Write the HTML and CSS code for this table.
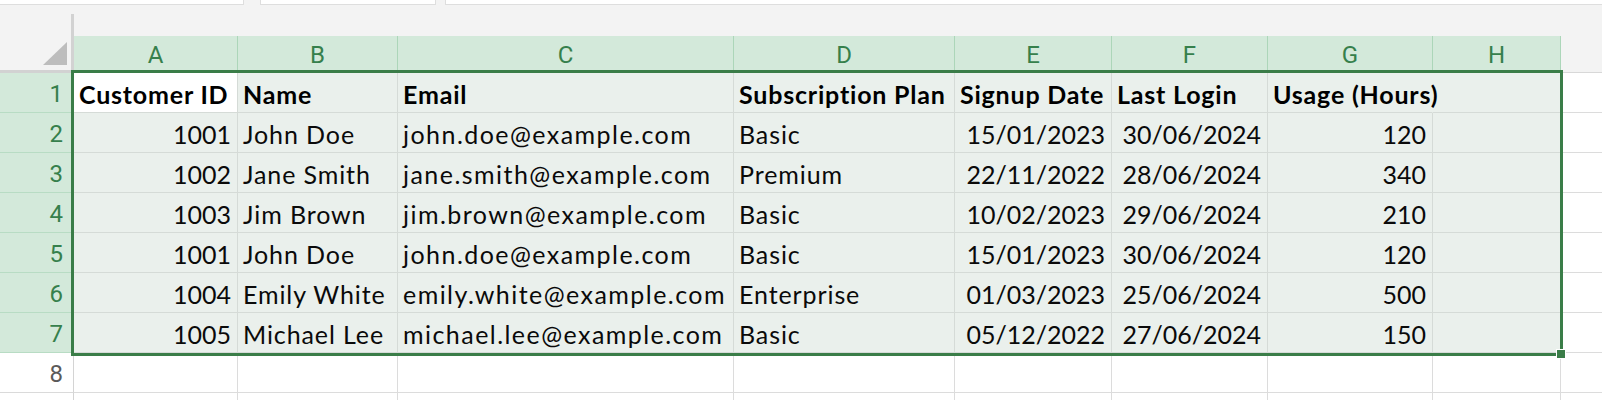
FILE: index.html
```html
<!DOCTYPE html>
<html>
<head>
<meta charset="utf-8">
<link rel="stylesheet" href="styles.css">
</head>
<body>
<div class="sheet">
  <div class="tabs"><span class="tab t1"></span><span class="tab t2"></span><span class="tab t3"></span></div>
  <div class="corner"><span class="tri"></span></div>
  <div class="gap"></div>

  <div class="ch">A</div><div class="ch">B</div><div class="ch">C</div><div class="ch">D</div><div class="ch">E</div><div class="ch">F</div><div class="ch">G</div><div class="ch">H</div><div class="ch-rest"></div>

  <div class="rh">1</div>
  <div class="c b active">Customer ID</div><div class="c b">Name</div><div class="c b">Email</div><div class="c b">Subscription Plan</div><div class="c b">Signup Date</div><div class="c b">Last Login</div><div class="c b ovf">Usage (Hours)</div><div class="c"></div><div class="rest"></div>

  <div class="rh">2</div>
  <div class="c num">1001</div><div class="c t">John Doe</div><div class="c m">john.doe@example.com</div><div class="c t">Basic</div><div class="c num">15/01/2023</div><div class="c num">30/06/2024</div><div class="c num">120</div><div class="c"></div><div class="rest"></div>

  <div class="rh">3</div>
  <div class="c num">1002</div><div class="c t">Jane Smith</div><div class="c m">jane.smith@example.com</div><div class="c t">Premium</div><div class="c num">22/11/2022</div><div class="c num">28/06/2024</div><div class="c num">340</div><div class="c"></div><div class="rest"></div>

  <div class="rh">4</div>
  <div class="c num">1003</div><div class="c t">Jim Brown</div><div class="c m">jim.brown@example.com</div><div class="c t">Basic</div><div class="c num">10/02/2023</div><div class="c num">29/06/2024</div><div class="c num">210</div><div class="c"></div><div class="rest"></div>

  <div class="rh">5</div>
  <div class="c num">1001</div><div class="c t">John Doe</div><div class="c m">john.doe@example.com</div><div class="c t">Basic</div><div class="c num">15/01/2023</div><div class="c num">30/06/2024</div><div class="c num">120</div><div class="c"></div><div class="rest"></div>

  <div class="rh">6</div>
  <div class="c num">1004</div><div class="c t">Emily White</div><div class="c m">emily.white@example.com</div><div class="c t">Enterprise</div><div class="c num">01/03/2023</div><div class="c num">25/06/2024</div><div class="c num">500</div><div class="c"></div><div class="rest"></div>

  <div class="rh">7</div>
  <div class="c num">1005</div><div class="c t">Michael Lee</div><div class="c m">michael.lee@example.com</div><div class="c t">Basic</div><div class="c num">05/12/2022</div><div class="c num">27/06/2024</div><div class="c num">150</div><div class="c"></div><div class="rest"></div>

  <div class="rh plain">8</div>
  <div class="c e"></div><div class="c e"></div><div class="c e"></div><div class="c e"></div><div class="c e"></div><div class="c e"></div><div class="c e"></div><div class="c e"></div><div class="rest"></div>

  <div class="rh plain"></div>
  <div class="c e"></div><div class="c e"></div><div class="c e"></div><div class="c e"></div><div class="c e"></div><div class="c e"></div><div class="c e"></div><div class="c e"></div><div class="rest"></div>

  <div class="sel"><span class="handle"></span></div>
</div>
</body>
</html>
```

FILE: styles.css
```css
html, body {
  margin: 0;
  background: #ffffff;
}

.sheet {
  position: relative;
  display: grid;
  grid-template-columns: 74px 164px 160px 336px 221px 157px 156px 165px 128px 1fr;
  grid-template-rows: 14px 22px 37px repeat(9, 40px);
  height: 400px;
  overflow: hidden;
  font-family: Lato, "Liberation Sans", sans-serif;
}

.tabs {
  grid-column: 1 / -1;
  background: #f3f3f3;
  display: flex;
  align-items: flex-start;
}

.tab {
  height: 5px;
  background: #ffffff;
  border: 1.5px solid #dedede;
  border-top: none;
  box-sizing: border-box;
}

.t1 { width: 245px; margin-left: -1px; border-left: none; }
.t2 { width: 176px; margin-left: 16px; }
.t3 { flex: 1; margin-left: 9px; border-right: none; }

.corner {
  grid-column: 1;
  grid-row: 2 / 4;
  background: #f3f3f3;
  border-right: 3px solid #d2d2d2;
  border-bottom: 3px solid #d2d2d2;
  display: flex;
  justify-content: flex-end;
  align-items: flex-end;
  padding: 0 4px 5px 0;
}

.tri {
  width: 24px;
  height: 23px;
  background: #bdbdbd;
  clip-path: polygon(100% 0, 100% 100%, 0 100%);
}

.gap {
  grid-column: 2 / -1;
  grid-row: 2;
  background: #f3f3f3;
}

.ch {
  background: #d3e9da;
  border-right: 1px solid #acd6b9;
  color: #36804c;
  font-family: Roboto, "Liberation Sans", sans-serif;
  font-size: 24px;
  display: flex;
  justify-content: center;
  align-items: center;
  padding: 4px 0 3px;
}

.ch-rest {
  background: #f3f3f3;
  border-bottom: 1px solid #d8d8d8;
}

.rh {
  background: #d3e9da;
  border-bottom: 1px solid #b8dcc4;
  border-right: 1px solid #d4d4d4;
  color: #36804c;
  font-family: Roboto, "Liberation Sans", sans-serif;
  font-size: 24px;
  display: flex;
  justify-content: flex-end;
  align-items: center;
  padding: 3px 10px 0 0;
}

.rh.plain {
  background: #ffffff;
  color: #5a5a5a;
  border-bottom-color: #dadada;
}

.c {
  background: #eaf0ec;
  border-right: 1px solid #d5dbd7;
  border-bottom: 1px solid #d5dbd7;
  display: flex;
  align-items: center;
  padding: 3px 5px 0;
  font-size: 25px;
  color: #0a0a0a;
  white-space: nowrap;
  overflow: hidden;
}

.c.t {
  letter-spacing: 0.9px;
}

.c.m {
  letter-spacing: 1.45px;
}

.c.b {
  font-weight: 700;
  color: #000000;
  letter-spacing: 0.8px;
}

.c.num {
  justify-content: flex-end;
  padding-right: 6px;
}

.c.active {
  background: #ffffff;
}

.c.ovf {
  overflow: visible;
  position: relative;
  z-index: 1;
  border-right-color: transparent;
}

.c.e {
  background: #ffffff;
  border-color: #dcdcdc;
}

.rest {
  background: #ffffff;
  border-bottom: 1px solid #dcdcdc;
}

.sel {
  position: absolute;
  left: 71px;
  top: 70px;
  width: 1492px;
  height: 286px;
  border: 3px solid #3a7d48;
  box-sizing: border-box;
  z-index: 2;
}

.handle {
  position: absolute;
  right: -6px;
  bottom: -6px;
  width: 8px;
  height: 8px;
  background: #3a7d48;
  border: 1px solid #ffffff;
}
```
